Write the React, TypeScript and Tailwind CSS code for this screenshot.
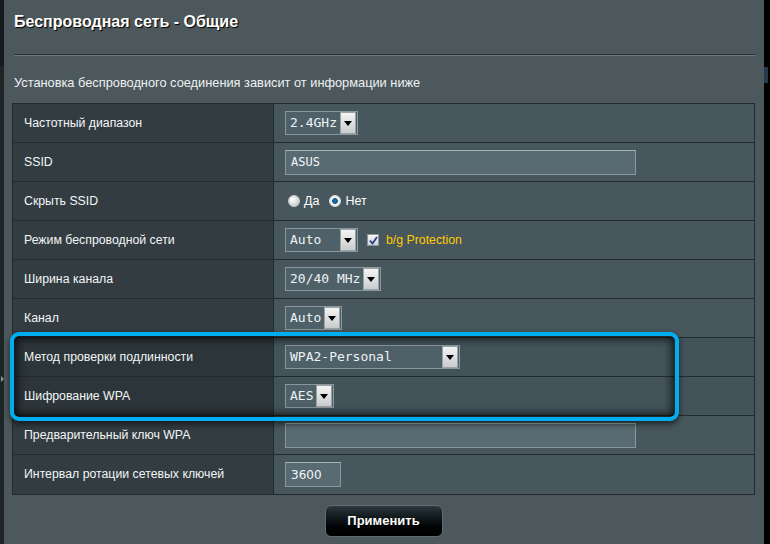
import React from "react";

const labelFont = "font-['Liberation_Sans',Arial,sans-serif]";
const monoFont = "font-['DejaVu_Sans_Mono',monospace]";

function Arrow() {
  return (
    <span className="flex h-[22px] w-[16px] items-center justify-center border border-[#9aa4a8] bg-gradient-to-b from-[#f4f4f4] to-[#c9cccd]">
      <svg width="8" height="5" viewBox="0 0 8 5">
        <path d="M0 0 H8 L4 5 Z" fill="#000" />
      </svg>
    </span>
  );
}

function Select({ value, width }: { value: string; width: string }) {
  return (
    <div
      className={`flex h-[24px] ${width} items-center justify-between border border-[#8a979c] bg-[#4f6168] pl-[4px] pr-[1px] text-[13px] text-[#eef3f5] ${monoFont}`}
    >
      <span>{value}</span>
      <Arrow />
    </div>
  );
}

function TextBox({ value, width, mono = true }: { value: string; width: string; mono?: boolean }) {
  return (
    <div
      className={`flex h-[25px] ${width} items-center border border-[#8a979c] border-t-[#a7b2b6] bg-[#596b72] pl-[5px] text-[12px] text-[#f2f6f7] ${
        mono ? monoFont : "font-['DejaVu_Sans',sans-serif]"
      }`}
    >
      {value}
    </div>
  );
}

function Radio({ checked }: { checked?: boolean }) {
  return (
    <span
      className={`inline-block h-[12px] w-[12px] rounded-full border ${
        checked
          ? "border-[#dfe6e8] bg-[radial-gradient(circle,#1b7fc0_0,#0d4f7a_35%,#f4f6f7_45%,#cfd4d6_100%)]"
          : "border-[#c8cdcf] bg-[radial-gradient(circle_at_35%_35%,#ffffff,#b9bec0)]"
      }`}
    />
  );
}

function Row({ label, children, dark }: { label: string; children: React.ReactNode; dark?: boolean }) {
  return (
    <div className="flex h-[39px] border-b border-[#232a2d] last:border-b-0">
      <div
        className={`flex w-[261px] items-center border-r border-[#232a2d] pl-[11px] text-[12.3px] text-[#f3f6f7] ${labelFont} ${
          dark ? "bg-[#2c3539]" : "bg-[#323c41]"
        }`}
      >
        {label}
      </div>
      <div className={`flex flex-1 items-center gap-[9px] pl-[11px] ${dark ? "bg-[#42535a]" : "bg-[#47575d]"}`}>
        {children}
      </div>
    </div>
  );
}

export default function App() {
  return (
    <div className="relative flex h-[544px] w-[770px] overflow-hidden bg-[#4d585d]">
      {/* left edge */}
      <div className="flex w-[4px] flex-col bg-[#1f2427]">
        <div className="h-[66px] bg-[#151b1f]" />
        <div className="mt-[310px] ml-[1px] h-0 w-0 border-y-[3px] border-l-[3px] border-y-transparent border-l-[#8c979b]" />
      </div>

      <div className="flex flex-1 flex-col pl-[8px] pr-[9px]">
        <h1
          className={`ml-[2px] mt-[10px] text-[16px] font-bold text-white [text-shadow:1px_1px_1px_#000] ${labelFont}`}
        >
          Беспроводная сеть - Общие
        </h1>
        <div className="ml-[2px] mt-[20px] h-[2px] border-t border-[#2a3134] border-b border-b-[#69767b]" />
        <p className={`ml-[2px] mt-[17px] text-[12.8px] text-[#eef2f3] ${labelFont}`}>
          Установка беспроводного соединения зависит от информации ниже
        </p>

        <div className="mt-[11px] flex flex-col border border-[#232a2d]">
          <Row label="Частотный диапазон">
            <Select value="2.4GHz" width="w-[73px]" />
          </Row>
          <Row label="SSID">
            <TextBox value="ASUS" width="w-[351px]" />
          </Row>
          <Row label="Скрыть SSID">
            <div className={`ml-[3px] flex items-center gap-[4px] text-[12.5px] text-white ${labelFont}`}>
              <Radio />
              <span className="mr-[6px]">Да</span>
              <Radio checked />
              <span>Нет</span>
            </div>
          </Row>
          <Row label="Режим беспроводной сети">
            <Select value="Auto" width="w-[73px]" />
            <div className={`flex items-center gap-[7px] text-[12.3px] text-[#ffcc00] ${labelFont}`}>
              <span className="flex h-[12px] w-[12px] items-center justify-center border border-[#8e9699] bg-gradient-to-b from-[#f7f7f7] to-[#cfd2d3]">
                <svg width="9" height="9" viewBox="0 0 9 9">
                  <path d="M1 4.5 L3.5 7.5 L8 1" stroke="#2f3c8a" strokeWidth="1.8" fill="none" />
                </svg>
              </span>
              <span>b/g Protection</span>
            </div>
          </Row>
          <Row label="Ширина канала">
            <Select value="20/40 MHz" width="w-[96px]" />
          </Row>
          <Row label="Канал">
            <Select value="Auto" width="w-[57px]" />
          </Row>
          <Row label="Метод проверки подлинности" dark>
            <Select value="WPA2-Personal" width="w-[175px]" />
          </Row>
          <Row label="Шифрование WPA" dark>
            <Select value="AES" width="w-[49px]" />
          </Row>
          <Row label="Предварительный ключ WPA">
            <TextBox value="" width="w-[351px]" />
          </Row>
          <Row label="Интервал ротации сетевых ключей">
            <TextBox value="3600" width="w-[56px]" mono={false} />
          </Row>
        </div>

        <div className="mt-[10px] flex justify-center">
          <button
            className={`h-[32px] w-[118px] rounded-[6px] border border-[#5f6d72] bg-gradient-to-b from-[#2b383d] via-[#0b1114] to-[#000] text-[13px] font-bold text-white [text-shadow:1px_1px_1px_#000] ${labelFont}`}
          >
            Применить
          </button>
        </div>
      </div>

      {/* right edge */}
      <div className="flex w-[6px] flex-col bg-black">
        <div className="mt-[67px] h-[16px] w-[4px] bg-[#27394a]" />
      </div>

      {/* highlight frame */}
      <div className="pointer-events-none absolute left-[10px] top-[332px] h-[89px] w-[669px] rounded-[9px] border-[4px] border-[#00aeef] shadow-[inset_0_0_8px_3px_rgba(0,0,0,0.75),0_3px_6px_rgba(0,0,0,0.6)]" />
    </div>
  );
}
